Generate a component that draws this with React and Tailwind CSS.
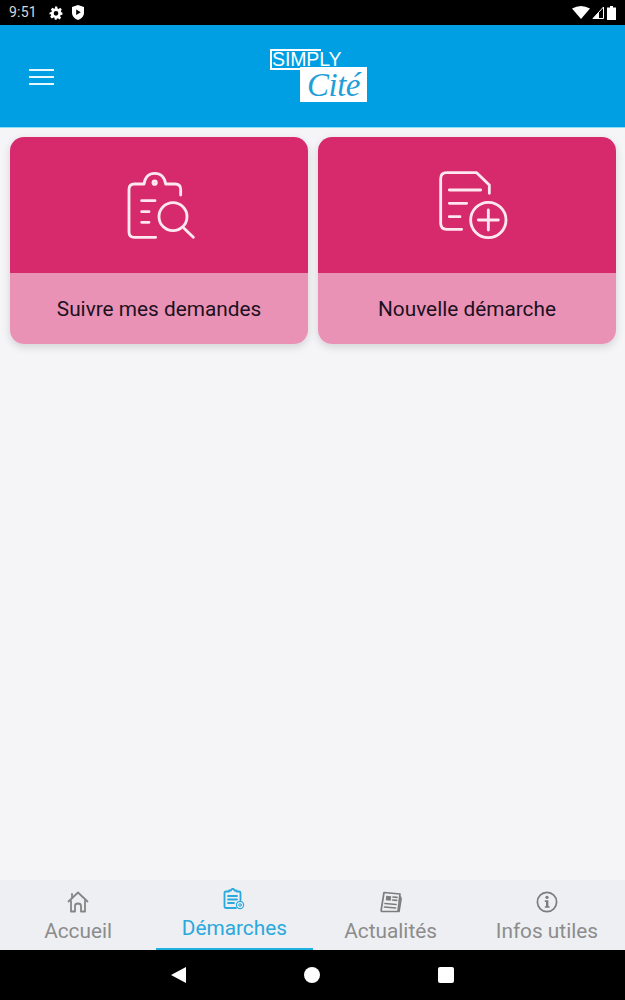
const roboto = { fontFamily: "Roboto, 'Liberation Sans', sans-serif" };

function SearchClipboardIcon() {
  return (
    <svg width="120" height="90" viewBox="0 0 360 270" fill="none" stroke="#fde8f0" strokeWidth="8.500" strokeLinecap="round" strokeLinejoin="round">
      <path d="M170 232H106Q90 232 90 216V88Q90 72 106 72H135Q140 40 167 40Q195 40 200 72H228Q245 72 245 88V105" />
      <circle cx="167" cy="68" r="5" />
      <path d="M128 122H168M128 155H150M128 187H150" />
      <circle cx="222" cy="170" r="42" />
      <path d="M255 205L283 232" />
    </svg>
  );
}

function NewDocumentIcon() {
  return (
    <svg width="120" height="90" viewBox="0 0 360 270" fill="none" stroke="#fde8f0" strokeWidth="8.500" strokeLinecap="round" strokeLinejoin="round" className="ml-[6px]">
      <path d="M155 208H110Q92 208 92 190V56Q92 38 110 38H200L238 75V100" />
      <path d="M118 90H212M118 130H170M118 170H150" />
      <circle cx="235" cy="180" r="53" />
      <path d="M235 150V210M205 180H265" />
    </svg>
  );
}

function HomeIcon() {
  return (
    <svg width="22" height="22" viewBox="0 0 22 22" fill="none" stroke="#858585" strokeWidth="1.800" strokeLinejoin="round" strokeLinecap="round">
      <path d="M1.500 10.500L11 1.500L20.500 10.500" />
      <path d="M4 10V20.500H8V15Q8 12.500 11 12.500Q14 12.500 14 15V20.500H18V10" />
      <path d="M5 6V3" />
    </svg>
  );
}

function RequestsIcon() {
  return (
    <svg width="22" height="22" viewBox="0 0 22 22" fill="none" stroke="#29a9dc" strokeWidth="1.800" strokeLinejoin="round" strokeLinecap="round">
      <path d="M13 20H3Q1.500 20 1.500 18.500V5Q1.500 3.500 3 3.500H6V2.500H8Q8.500 0.800 9.800 0.800Q11 0.800 11.500 2.500H13.500V3.500H16Q17.500 3.500 17.500 5V12" />
      <path d="M5 8H14M5 11.500H14M5 15H11" />
      <circle cx="17" cy="17" r="3.600" strokeWidth="1.200" />
      <circle cx="17" cy="17" r="1.300" strokeWidth="1" />
    </svg>
  );
}

function NewsIcon() {
  return (
    <svg width="22" height="22" viewBox="0 0 22 22" fill="none" stroke="#7d7d7d" strokeWidth="1.700" strokeLinejoin="round" strokeLinecap="round">
      <path d="M4 1.500L20 3L18 20.500H2.500Q1 20.500 1.200 19Z" />
      <path d="M20.500 6L21 8L19 20.500" />
      <rect x="6" y="5" width="5" height="4.500" fill="#7d7d7d" stroke="none" transform="rotate(5 8 7)" />
      <path d="M13 6L17 6.400M12.700 9L16.700 9.400M5 12.500L16 13.500M4.600 16L15.600 17" />
    </svg>
  );
}

function InfoIcon() {
  return (
    <svg width="22" height="22" viewBox="0 0 22 22" fill="none">
      <circle cx="11" cy="11" r="9.600" stroke="#7d7d7d" strokeWidth="1.700" />
      <circle cx="11" cy="6.300" r="1.600" fill="#7d7d7d" />
      <path d="M8.800 9.300H12.400V15.200H13.600V16.800H8.800V15.200H10V10.900H8.800Z" fill="#7d7d7d" />
    </svg>
  );
}

function ActionCard({ icon, label }) {
  return (
    <div className="flex-1 h-[207px] flex flex-col rounded-[14px] overflow-hidden shadow-[0_3px_8px_rgba(0,0,0,0.14)]">
      <div className="h-[136px] bg-[#d62a6d] flex items-center justify-center">{icon}</div>
      <div className="flex-1 bg-[#ea92b6] flex items-center justify-center pt-[2px] text-[20.800px] text-[#1b1120]">{label}</div>
    </div>
  );
}

function Tab({ icon, label, active }) {
  return (
    <div className={`flex-1 flex flex-col items-center border-b-2 ${active ? "border-[#1eb0e0] pt-[8px] text-[#29a9dc]" : "border-transparent pt-[11px] text-[#8c8c8c]"}`}>
      {icon}
      <span className="text-[20.800px] leading-[24px] mt-[6px]">{label}</span>
    </div>
  );
}

export default function App() {
  return (
    <div className="w-[625px] h-[1000px] flex flex-col bg-[#f5f5f8]" style={roboto}>
      {/* status bar */}
      <div className="h-[25px] bg-black flex items-center pl-[9px] pr-[9px] text-[#d8d8d8] text-[14px]">
        <span className="w-[30px] tracking-[0.2px]">9:51</span>
        <svg width="14" height="14" viewBox="0 0 24 24" fill="#fff" className="ml-[10px]">
          <path fillRule="evenodd" d="M10 1h4l.6 3.200 1.900.8 2.700-1.800 2.800 2.800-1.800 2.700.8 1.900L23 11v4l-3.200.6-.8 1.900 1.800 2.700-2.800 2.800-2.700-1.800-1.900.8L13 23.500h-3l-.6-3.200-1.900-.8-2.700 1.800-2.800-2.800 1.800-2.700-.8-1.900L1 15v-4l3.200-.6.8-1.900L3.200 5.800l2.800-2.800 2.700 1.800 1.900-.8zM12 8.500a4 4 0 1 0 0 8 4 4 0 0 0 0-8z" />
        </svg>
        <svg width="12" height="15" viewBox="0 0 12 15" className="ml-[9px]">
          <path d="M6 0L12 2V8Q12 12.500 6 15Q0 12.500 0 8V2Z" fill="#fff" />
          <path d="M4.200 4.500L8.800 7.300L4.200 10Z" fill="#000" />
        </svg>
        <div className="flex-1" />
        <svg width="18" height="13" viewBox="0 0 18 13"><path d="M0 2.500Q9 -2.500 18 2.500L9 13Z" fill="#fff" /></svg>
        <svg width="12" height="13" viewBox="0 0 12 13" className="ml-[2px]"><path d="M11.500 1V12.500H1Z" fill="none" stroke="#fff" strokeWidth="1" /><path d="M7 6V13H0.500Z" fill="#fff" /></svg>
        <svg width="9" height="14" viewBox="0 0 9 14" className="ml-[3px]"><path d="M3 0H6V1.500H9V14H0V1.500H3Z" fill="#fff" /></svg>
      </div>

      {/* app header */}
      <header className="h-[103px] bg-[#009fe3] border-b border-[#8fdcf5] flex items-center pl-[29px]">
        <div className="w-[25px] mt-[2px] flex flex-col gap-[5px]">
          <span className="h-[2px] bg-[#e6f7fd]" />
          <span className="h-[2px] bg-[#e6f7fd]" />
          <span className="h-[2px] bg-[#e6f7fd]" />
        </div>
        <div className="ml-[216px] mb-[1px] w-[97px] h-[53px] relative">
          <div className="absolute left-0 top-0 w-[51px] h-[20px] border-l-2 border-t-2 border-white" />
          <div className="absolute left-0 top-[19px] w-[31px] h-[2px] bg-white" />
          <span className="absolute left-[2px] top-[2px] text-white text-[19.500px] leading-[16px] tracking-[-0.100px]" style={{ fontFamily: "'Liberation Sans', sans-serif" }}>SIMPLY</span>
          <div className="absolute right-0 bottom-0 w-[67px] h-[35px] bg-white flex items-center justify-center">
            <span className="text-[#1f9fd8] text-[33px] leading-[30px] italic tracking-[-0.500px]" style={{ fontFamily: "'Liberation Serif', serif" }}>Cité</span>
          </div>
        </div>
      </header>

      {/* main actions */}
      <main className="flex-1 flex items-start gap-[10px] pt-[9px] pl-[10px] pr-[9px]">
        <ActionCard icon={<SearchClipboardIcon />} label="Suivre mes demandes" />
        <ActionCard icon={<NewDocumentIcon />} label="Nouvelle démarche" />
      </main>

      {/* bottom tabs */}
      <nav className="h-[70px] bg-[#eeeff3] flex">
        <Tab icon={<HomeIcon />} label="Accueil" />
        <Tab icon={<RequestsIcon />} label="Démarches" active />
        <Tab icon={<NewsIcon />} label="Actualités" />
        <Tab icon={<InfoIcon />} label="Infos utiles" />
      </nav>

      {/* system navigation */}
      <div className="h-[50px] bg-black flex items-center justify-center pb-[1px]">
        <div className="flex items-center gap-[118px]">
          <svg width="15" height="16" viewBox="0 0 15 16"><path d="M15 0V16L0 8Z" fill="#fff" /></svg>
          <span className="w-[16px] h-[16px] rounded-full bg-white" />
          <span className="w-[16px] h-[16px] rounded-[2px] bg-white" />
        </div>
      </div>
    </div>
  );
}
